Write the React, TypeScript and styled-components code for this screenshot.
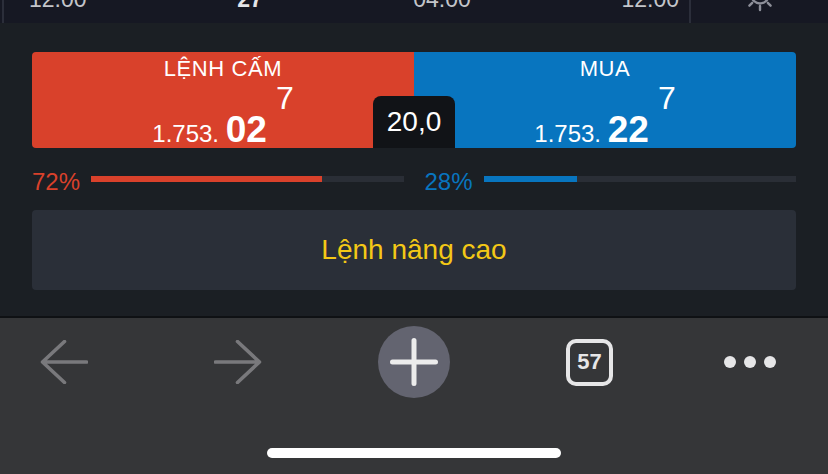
import React, { FunctionComponent, ReactElement } from 'react'
import styled, { createGlobalStyle } from 'styled-components'

const SELL = '#d9412b'
const BUY = '#0875bf'

const GlobalStyle = createGlobalStyle`
  html,
  body {
    background: #353638;
    margin: 0;
    padding: 0;
  }

  body {
    font-family: "Liberation Sans", Arial, sans-serif;
  }

  #root {
    display: flex;
    flex-direction: column;
    height: 474px;
    overflow: hidden;
    width: 828px;
  }
`

const TimeStrip = styled.div`
  background: #161823;
  display: flex;
  flex: 0 0 23px;
  overflow: hidden;
  padding-left: 2px;
`

const Axis = styled.div`
  align-items: flex-start;
  border-left: 2px solid #2b2e3a;
  border-right: 2px solid #2b2e3a;
  box-sizing: border-box;
  display: flex;
  justify-content: space-between;
  padding: 0 10px 0 25px;
  width: 689px;
`

const AxisLabel = styled.span<{ $strong?: boolean }>`
  color: ${(p) => (p.$strong ? '#e4e5e8' : '#c3c5ca')};
  font-size: 23px;
  font-weight: ${(p) => (p.$strong ? 700 : 400)};
  line-height: 23px;
  margin-top: -12px;
`

const AxisTool = styled.div`
  align-items: flex-start;
  display: flex;
  flex: 1;
  justify-content: center;

  svg {
    margin-top: -23px;
  }
`

const Trade = styled.section`
  background: #1b1f24;
  border-bottom: 2px solid #0f1114;
  display: flex;
  flex-direction: column;
  padding: 29px 32px 26px;
`

const Sides = styled.div`
  display: flex;
  height: 96px;
  position: relative;
`

const Side = styled.div<{ $tone: 'sell' | 'buy' }>`
  align-items: center;
  background: ${(p) => (p.$tone === 'sell' ? SELL : BUY)};
  border-radius: ${(p) => (p.$tone === 'sell' ? '4px 0 0 4px' : '0 4px 4px 0')};
  color: #fff;
  display: flex;
  flex: 1;
  flex-direction: column;
  padding-top: 4px;
`

const SideTitle = styled.div`
  font-size: 22px;
  letter-spacing: 0.6px;
  line-height: 26px;
`

const PriceRow = styled.div`
  align-items: flex-end;
  display: flex;
  flex: 1;
  justify-content: center;
`

const Price = styled.div`
  font-size: 24px;
  line-height: 1;
  white-space: pre;
`

const Pips = styled.b`
  font-size: 37px;
  font-weight: 700;
  line-height: 1;
`

const Fraction = styled.span`
  align-self: flex-start;
  font-size: 32px;
  line-height: 32px;
  margin-left: 9px;
`

const Spread = styled.div`
  background: #111317;
  border-radius: 8px 8px 0 0;
  bottom: 0;
  color: #fff;
  font-size: 28px;
  height: 52px;
  left: 50%;
  line-height: 52px;
  position: absolute;
  text-align: center;
  transform: translateX(-50%);
  width: 82px;
`

const Ratio = styled.div`
  display: flex;
  gap: 21px;
  margin-top: 22px;
`

const RatioItem = styled.div`
  align-items: center;
  display: flex;
  flex: 1;
  gap: 11px;
`

const Pct = styled.span<{ $color: string }>`
  color: ${(p) => p.$color};
  font-size: 24px;
  line-height: 24px;
`

const Track = styled.div`
  background: #2a2e36;
  flex: 1;
  height: 6px;
  margin-bottom: 6px;
`

const Fill = styled.div<{ $color: string }>`
  background: ${(p) => p.$color};
  height: 100%;
`

const AdvancedButton = styled.button`
  align-items: center;
  background: #2a2f38;
  border: 0;
  border-radius: 4px;
  color: #f4c816;
  display: flex;
  font-family: inherit;
  font-size: 28px;
  height: 80px;
  justify-content: center;
  margin-top: 16px;
  padding: 0;
  width: 100%;
`

const Toolbar = styled.nav`
  background: #353638;
  display: flex;
  flex: 1;
  flex-direction: column;
`

const ToolRow = styled.div`
  align-items: center;
  display: flex;
  height: 88px;
  padding-left: 40px;
`

const ToolSlot = styled.div<{ $offset?: number }>`
  align-items: center;
  display: flex;
  justify-content: center;
  margin-left: ${(p) => p.$offset ?? 0}px;
`

const NewTab = styled.div`
  align-items: center;
  background: #636470;
  border-radius: 50%;
  display: flex;
  height: 72px;
  justify-content: center;
  width: 72px;
`

const TabCount = styled.div`
  align-items: center;
  border: 4.5px solid #e6e6e7;
  border-radius: 10px;
  box-sizing: border-box;
  color: #e6e6e7;
  display: flex;
  font-size: 22px;
  font-weight: 700;
  height: 47px;
  justify-content: center;
  width: 47px;
`

const Dots = styled.div`
  display: flex;
  gap: 8px;
`

const Dot = styled.span`
  background: #e6e6e7;
  border-radius: 50%;
  display: block;
  height: 12px;
  width: 12px;
`

const HomeIndicator = styled.div`
  align-self: center;
  background: #fff;
  border-radius: 5px;
  height: 10px;
  margin-top: 42px;
  width: 294px;
`

const sides = [
  { tone: 'sell' as const, title: 'LỆNH CẤM', big: '1.753. ', pips: '02', frac: '7' },
  { tone: 'buy' as const, title: 'MUA', big: '1.753. ', pips: '22', frac: '7' },
]

const ratios = [
  { label: '72%', fill: 74, color: SELL },
  { label: '28%', fill: 30, color: BUY },
]

const BrightnessIcon = (): ReactElement => {
  const rays = [0, 45, 90, 135, 180, 225, 270, 315]
  return (
    <svg width="36" height="36" viewBox="-18 -18 36 36" fill="none" stroke="#8d8f99" strokeWidth="2.4" strokeLinecap="round">
      <circle r="8.5" />
      {rays.map((a) => {
        const r = (a * Math.PI) / 180
        return (
          <line key={a} x1={Math.cos(r) * 11} y1={Math.sin(r) * 11} x2={Math.cos(r) * 15} y2={Math.sin(r) * 15} />
        )
      })}
    </svg>
  )
}

const Arrow = ({ dir }: { dir: 'back' | 'forward' }): ReactElement => (
  <svg width="48" height="44" viewBox="0 0 48 44" fill="none" stroke="#79797c" strokeWidth="3.6" strokeLinecap="round" strokeLinejoin="round">
    {dir === 'back' ? <path d="M46.5 22H2.5M24.5 1.5 2.5 22l22 20.5" /> : <path d="M1.5 22h44M23.5 1.5l22 20.5-22 20.5" />}
  </svg>
)

const App: FunctionComponent = (): ReactElement => (
  <>
    <GlobalStyle />
    <TimeStrip>
      <Axis>
        <AxisLabel>12:00</AxisLabel>
        <AxisLabel $strong>27</AxisLabel>
        <AxisLabel>04:00</AxisLabel>
        <AxisLabel>12:00</AxisLabel>
      </Axis>
      <AxisTool>
        <BrightnessIcon />
      </AxisTool>
    </TimeStrip>

    <Trade>
      <Sides>
        {sides.map((s) => (
          <Side key={s.tone} $tone={s.tone}>
            <SideTitle>{s.title}</SideTitle>
            <PriceRow>
              <Price>
                {s.big}
                <Pips>{s.pips}</Pips>
              </Price>
              <Fraction>{s.frac}</Fraction>
            </PriceRow>
          </Side>
        ))}
        <Spread>20,0</Spread>
      </Sides>

      <Ratio>
        {ratios.map((r) => (
          <RatioItem key={r.label}>
            <Pct $color={r.color}>{r.label}</Pct>
            <Track>
              <Fill $color={r.color} style={{ width: `${r.fill}%` }} />
            </Track>
          </RatioItem>
        ))}
      </Ratio>

      <AdvancedButton>Lệnh nâng cao</AdvancedButton>
    </Trade>

    <Toolbar>
      <ToolRow>
        <ToolSlot>
          <Arrow dir="back" />
        </ToolSlot>
        <ToolSlot $offset={126}>
          <Arrow dir="forward" />
        </ToolSlot>
        <ToolSlot $offset={116}>
          <NewTab>
            <svg width="48" height="48" viewBox="0 0 48 48" fill="none" stroke="#ececec" strokeWidth="5" strokeLinecap="round">
              <path d="M24 2.5v43M2.5 24h43" />
            </svg>
          </NewTab>
        </ToolSlot>
        <ToolSlot $offset={116}>
          <TabCount>57</TabCount>
        </ToolSlot>
        <ToolSlot $offset={111}>
          <Dots>
            <Dot />
            <Dot />
            <Dot />
          </Dots>
        </ToolSlot>
      </ToolRow>
      <HomeIndicator />
    </Toolbar>
  </>
)

export default App
